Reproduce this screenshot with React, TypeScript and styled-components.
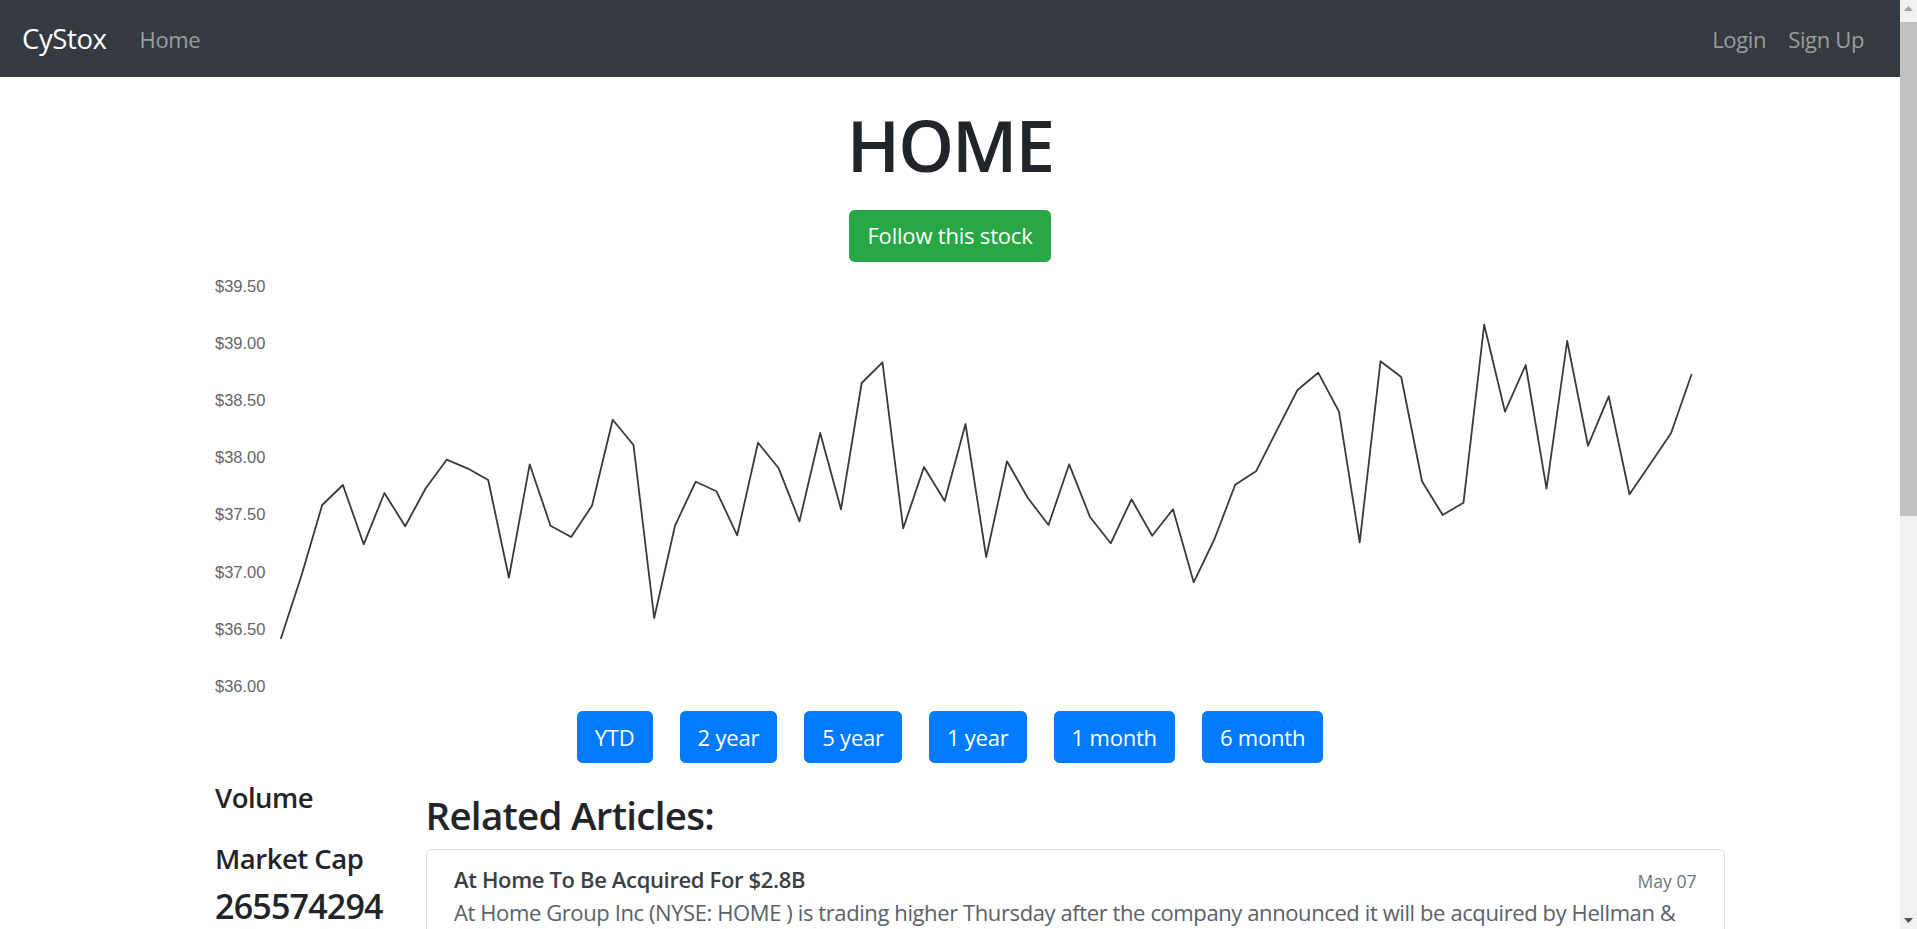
import React from "react";
import styled, { createGlobalStyle } from "styled-components";

const prices = [
  640, 576.7, 506, 486, 545.3, 494, 527.3, 489, 460.7, 469.3, 481, 578.7, 465.3, 526.7, 538, 506.7,
  420.7, 446, 619, 526.7, 482.7, 492.3, 536.3, 443.7, 469.3, 522.3, 434, 510.3, 384, 363.3, 529.3,
  468, 502, 425, 558, 462.3, 498.7, 526, 465.3, 518, 544.3, 500.3, 536.7, 510.3, 583.3, 540, 485.7,
  472.3, 431.7, 391, 373.7, 412.7, 543.3, 362.3, 378, 482.3, 516, 503.7, 325.7, 412.7, 366, 489.7,
  342, 446.7, 397.3, 495.3, 465, 434.3, 375,
];

const ticks = ["$39.50", "$39.00", "$38.50", "$38.00", "$37.50", "$37.00", "$36.50", "$36.00"];

const ranges = ["YTD", "2 year", "5 year", "1 year", "1 month", "6 month"];

const articles = [
  {
    title: "At Home To Be Acquired For $2.8B",
    date: "May 07",
    text:
      "At Home Group Inc (NYSE: HOME ) is trading higher Thursday after the company announced it will be acquired by Hellman & Friedman in an all-cash transaction valued at approximately $2.8 billion, including debt. Shareholders will receive $36.00 per share in cash.",
  },
  {
    title: "At Home Group Q4 Earnings Beat Estimates",
    date: "Mar 23",
    text:
      "At Home Group reported quarterly earnings of $0.70 per share, beating the analyst consensus estimate. Quarterly sales came in at $543.5 million, up 55% from the same period last year, as comparable store sales grew strongly across the chain.",
  },
  {
    title: "Home Decor Retailers Rally On Housing Data",
    date: "Mar 02",
    text:
      "Shares of home furnishing retailers moved higher after new housing data showed continued demand for home improvement and decor products. Analysts pointed to elevated spending on the home as consumers continue to upgrade their living spaces.",
  },
  {
    title: "Analyst Raises At Home Price Target",
    date: "Feb 18",
    text:
      "An analyst raised the price target on At Home Group and maintained an Outperform rating, citing strong traffic trends, improving margins and a healthy runway for new store openings over the coming years.",
  },
  {
    title: "At Home Announces New Store Openings",
    date: "Jan 27",
    text:
      "At Home Group announced plans to open new stores during the fiscal year, expanding its footprint in several states as the home decor superstore continues its growth strategy.",
  },
];

const App = () => {
  const points = prices.map((y, i) => `${(280.7 + i * 20.75).toFixed(1)},${y}`).join(" ");

  return (
    <Shell>
      <GlobalStyle />
      <Page>
        <Navbar>
          <Brand>CyStox</Brand>
          <NavGroup>
            <NavLink>Home</NavLink>
          </NavGroup>
          <NavGroup $right>
            <NavLink>Login</NavLink>
            <NavLink>Sign Up</NavLink>
          </NavGroup>
        </Navbar>

        <Header>
          <Title>HOME</Title>
          <Button $variant="success">Follow this stock</Button>
        </Header>

        <Chart width={1490} height={430} viewBox="205 270 1490 430">
          {ticks.map((t, i) => (
            <TickLabel key={t} x={215} y={292.7 + i * 57.19}>
              {t}
            </TickLabel>
          ))}
          <polyline points={points} fill="none" stroke="#3a3a3a" strokeWidth={1.8} strokeLinejoin="round" />
        </Chart>

        <RangeRow>
          {ranges.map((r) => (
            <Button key={r} $variant="primary">
              {r}
            </Button>
          ))}
        </RangeRow>

        <Details>
          <Stats>
            <StatLabel>Volume</StatLabel>
            <StatLabel $gap>Market Cap</StatLabel>
            <StatValue>265574294</StatValue>
          </Stats>
          <Articles>
            <SectionTitle>Related Articles:</SectionTitle>
            {articles.map((a) => (
              <Card key={a.title}>
                <CardHead>
                  <CardTitle>{a.title}</CardTitle>
                  <CardDate>{a.date}</CardDate>
                </CardHead>
                <CardText>{a.text}</CardText>
              </Card>
            ))}
          </Articles>
        </Details>
      </Page>

      <ScrollTrack>
        <ScrollArrow>
          <svg width="9" height="5" viewBox="0 0 9 5">
            <polygon points="0,5 9,5 4.5,0" fill="#a3a3a3" />
          </svg>
        </ScrollArrow>
        <ScrollThumb />
        <ScrollArrow $bottom>
          <svg width="9" height="5" viewBox="0 0 9 5">
            <polygon points="0,0 9,0 4.5,5" fill="#505050" />
          </svg>
        </ScrollArrow>
      </ScrollTrack>
    </Shell>
  );
};

export default App;

const GlobalStyle = createGlobalStyle`
  html, body {
    margin: 0;
    overflow: hidden;
  }
  body {
    background: #fff;
    color: #212529;
    font-family: "Open Sans", "Noto Sans", sans-serif;
  }
`;

const Shell = styled.div`
  display: flex;
  height: 100vh;
`;

const Page = styled.div`
  flex: 1;
  min-width: 0;
  overflow-y: auto;
  scrollbar-width: none;

  &::-webkit-scrollbar {
    display: none;
  }
`;

const ScrollTrack = styled.div`
  width: 17px;
  flex-shrink: 0;
  display: flex;
  flex-direction: column;
  background: #f1f1f1;
`;

const ScrollArrow = styled.div<{ $bottom?: boolean }>`
  height: 17px;
  display: flex;
  align-items: center;
  justify-content: center;
  margin-top: ${(p) => (p.$bottom ? "auto" : "0")};
`;

const ScrollThumb = styled.div`
  height: 494px;
  margin-top: 5px;
  background: #c1c1c1;
`;

const Navbar = styled.nav`
  height: 77px;
  box-sizing: border-box;
  display: flex;
  align-items: center;
  padding: 0 25px 0 22px;
  background: #343a40;
`;

const Brand = styled.a`
  font-size: 27.5px;
  line-height: 1.5;
  color: #fff;
  margin-right: 22px;
  padding-top: 1px;
  letter-spacing: -0.4px;
`;

const NavGroup = styled.div<{ $right?: boolean }>`
  display: flex;
  margin-left: ${(p) => (p.$right ? "auto" : "0")};
`;

const NavLink = styled.a`
  font-size: 22px;
  line-height: 1.5;
  padding: 2px 11px 0;
  letter-spacing: -0.35px;
  color: rgba(255, 255, 255, 0.5);
`;

const Header = styled.div`
  display: flex;
  flex-direction: column;
  align-items: center;
`;

const Title = styled.h1`
  margin: 25px 0 23px;
  font-size: 71px;
  font-weight: 600;
  line-height: 1.2;
  letter-spacing: -2px;
`;

const Button = styled.button<{ $variant: "primary" | "success" }>`
  font-family: inherit;
  font-size: 22px;
  line-height: 33px;
  letter-spacing: -0.2px;
  padding: 8.25px 17px;
  border-radius: 5.5px;
  color: #fff;
  border: 1px solid ${(p) => (p.$variant === "success" ? "#28a745" : "#007bff")};
  background: ${(p) => (p.$variant === "success" ? "#28a745" : "#007bff")};
`;

const Chart = styled.svg`
  display: block;
  margin: 7px auto 0;
`;

const TickLabel = styled.text`
  font-family: "Liberation Sans", Arial, sans-serif;
  font-size: 16.5px;
  fill: #666;
`;

const RangeRow = styled.div`
  display: flex;
  justify-content: center;
  gap: 27px;
  margin-top: 12.7px;
`;

const Details = styled.div`
  display: grid;
  grid-template-columns: 210.5px 1299.5px;
  padding-left: 215px;
  margin-top: 18.5px;
  padding-bottom: 60px;
`;

const Stats = styled.div`
  display: flex;
  flex-direction: column;
  align-items: flex-start;
`;

const StatLabel = styled.h5<{ $gap?: boolean }>`
  margin: ${(p) => (p.$gap ? "28px 0 10.4px" : "0")};
  font-size: 27.5px;
  font-weight: 600;
  line-height: 1.2;
  letter-spacing: -0.5px;
`;

const StatValue = styled.h4`
  margin: 0;
  font-size: 34px;
  font-weight: 600;
  line-height: 1.2;
  letter-spacing: -0.8px;
`;

const Articles = styled.div`
  padding-top: 10.7px;
`;

const SectionTitle = styled.h2`
  margin: 0 0 10.3px;
  font-size: 38.5px;
  font-weight: 600;
  line-height: 1.2;
  letter-spacing: -0.7px;
`;

const Card = styled.div`
  border: 1px solid rgba(0, 0, 0, 0.125);
  border-radius: 5.5px;
  padding: 16.5px 27.5px;
  margin-bottom: 16.5px;
`;

const CardHead = styled.div`
  display: flex;
  justify-content: space-between;
  align-items: baseline;
`;

const CardTitle = styled.h6`
  margin: 0;
  font-size: 22px;
  font-weight: 600;
  line-height: 1.2;
  letter-spacing: -0.35px;
  color: #3a3f44;
`;

const CardDate = styled.small`
  font-size: 17.6px;
  color: #6c757d;
`;

const CardText = styled.p`
  margin: 3.3px 0 0;
  font-size: 22px;
  line-height: 1.5;
  letter-spacing: -0.4px;
  color: #5a6169;
`;
